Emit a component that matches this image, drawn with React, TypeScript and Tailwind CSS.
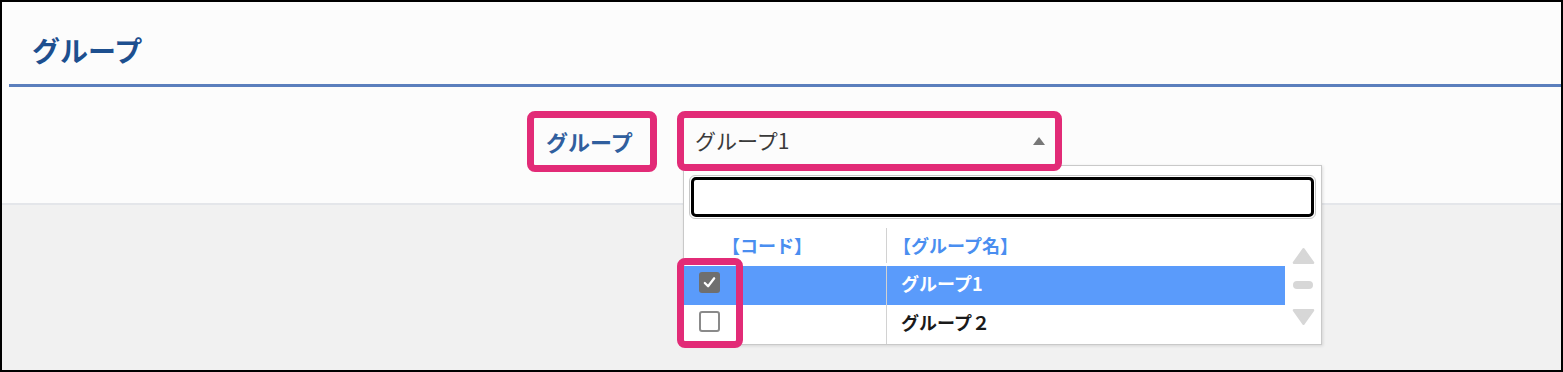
import { useState } from 'react'

// ── Small pieces ──────────────────────────────────────────────────────────────

const PINK = 'border-[#e22b77]'

function Checkbox({ checked }: { checked: boolean }) {
  if (checked) {
    return (
      <span className="flex h-[21px] w-[21px] items-center justify-center rounded-[3px] bg-[#6f6f6f]">
        <svg viewBox="0 0 16 16" className="h-[15px] w-[15px]">
          <path
            d="M3 8.5 L6.5 12 L13 3.5"
            fill="none"
            stroke="#fff"
            strokeWidth="2.4"
            strokeLinecap="round"
            strokeLinejoin="round"
          />
        </svg>
      </span>
    )
  }
  return <span className="block h-[21px] w-[21px] rounded-[3px] border-2 border-[#8a8a8a] bg-white" />
}

function ScrollArrows() {
  return (
    <div className="flex h-full flex-col items-center pt-[19px]">
      <svg viewBox="0 0 24 18" className="h-[18px] w-[23px]">
        <path d="M12 2 L22 16 L2 16 Z" fill="#d7d7d7" stroke="#d7d7d7" strokeWidth="2.5" strokeLinejoin="round" />
      </svg>
      <span className="mt-[16px] block h-[8px] w-[20px] rounded-full bg-[#d7d7d7]" />
      <svg viewBox="0 0 24 18" className="mt-[19px] h-[18px] w-[23px]">
        <path d="M2 2 L22 2 L12 16 Z" fill="#d7d7d7" stroke="#d7d7d7" strokeWidth="2.5" strokeLinejoin="round" />
      </svg>
    </div>
  )
}

// ── Dropdown ──────────────────────────────────────────────────────────────────

const ROWS = [
  { code: '', name: 'グループ1', checked: true },
  { code: '', name: 'グループ２', checked: false },
]

function Dropdown() {
  const [query, setQuery] = useState('')
  return (
    <div className="absolute left-[6px] top-[54px] z-10 w-[639px] border border-[#c9c9c9] bg-white shadow-[1px_1px_3px_rgba(0,0,0,0.12)]">
      {/* search */}
      <div className="px-[5px] pt-[9px]">
        <div className="rounded-[6px] border border-[#c6c6c6] p-[1px]">
          <input
            value={query}
            onChange={(e) => setQuery(e.target.value)}
            className="block h-[40px] w-full rounded-[5px] border-[3px] border-black bg-white px-2 outline-none"
          />
        </div>
      </div>

      {/* list */}
      <div className="mt-[9px] flex">
        <div className="w-[601px]">
          <div className="flex h-[38px] items-center pb-[3px] text-[18px] font-bold text-[#4a8ef0]">
            <div className="w-[202px] pl-[38px]">【コード】</div>
            <div className="flex h-full flex-1 items-center border-l border-[#d2d2d2] pl-[6px]">【グループ名】</div>
          </div>
          {ROWS.map((r) => (
            <div
              key={r.name}
              className={
                'flex h-[39px] items-center text-[18px] font-bold ' +
                (r.checked ? 'bg-[#5a9bfb] text-white' : 'bg-white text-[#1a1a1a]')
              }
            >
              <div className="flex w-[202px] items-center pb-[6px] pl-[15px]">
                <Checkbox checked={r.checked} />
              </div>
              <div className="flex h-full flex-1 items-center border-l border-[#d2d2d2] pb-[5px] pl-[14px]">{r.name}</div>
            </div>
          ))}
        </div>
        <div className="flex-1">
          <ScrollArrows />
        </div>
      </div>

      {/* annotation around the checkboxes */}
      <div className={`pointer-events-none absolute left-[-7px] top-[92px] z-20 h-[90px] w-[66px] rounded-[8px] border-[7px] ${PINK}`} />
    </div>
  )
}

// ── Main ──────────────────────────────────────────────────────────────────────

export default function App() {
  return (
    <div className="h-[372px] w-[1563px] overflow-hidden border-2 border-black bg-[#f1f1f1] font-['Noto_Sans_CJK_JP','Noto_Sans',sans-serif]">
      <div className="h-[203px] border-b-2 border-[#e4e6ea] bg-[#fcfcfc]">
        <h1 className="h-[82px] pl-[30px] pt-[34px] text-[28px] font-bold leading-none text-[#1d4f8f]">グループ</h1>
        <div className="ml-[7px] h-[3px] bg-[#5b7fbd]" />

        <div className="flex items-start gap-[20px] pl-[525px] pt-[24px]">
          {/* label */}
          <div className={`flex h-[61px] w-[130px] items-center rounded-[8px] border-[7px] ${PINK} pl-[12px] text-[22px] font-semibold text-[#305f9e]`}>
            グループ
          </div>

          {/* select */}
          <div className="relative h-[60px] w-[385px]">
            <div className="flex h-full items-center justify-between pl-[18px] pr-[17px] text-[21px] text-[#3a3a3a]">
              <span>グループ1</span>
              <svg viewBox="0 0 12 8" className="h-[8px] w-[12px]">
                <path d="M6 0 L12 8 L0 8 Z" fill="#777" />
              </svg>
            </div>
            <Dropdown />
            <div className={`pointer-events-none absolute inset-0 z-20 rounded-[8px] border-[7px] ${PINK}`} />
          </div>
        </div>
      </div>
    </div>
  )
}
